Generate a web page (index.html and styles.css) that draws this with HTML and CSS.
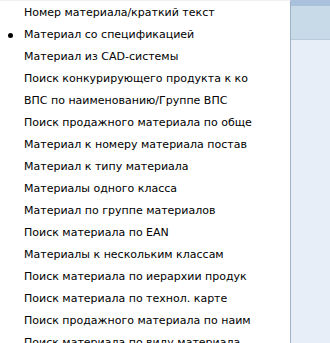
FILE: index.html
```html
<!DOCTYPE html>
<html lang="ru">
  <head>
    <meta charset="UTF-8" />
    <title>Поиск материала</title>
    <link rel="stylesheet" href="styles.css">
  </head>
  <body>
    <div class="screen">
      <ul class="menu">
        <li>Номер материала/краткий текст</li>
        <li class="active">Материал со спецификацией</li>
        <li>Материал из CAD-системы</li>
        <li>Поиск конкурирующего продукта к ко</li>
        <li>ВПС по наименованию/Группе ВПС</li>
        <li>Поиск продажного материала по обще</li>
        <li>Материал к номеру материала постав</li>
        <li>Материал к типу материала</li>
        <li>Материалы одного класса</li>
        <li>Материал по группе материалов</li>
        <li>Поиск материала по EAN</li>
        <li>Материалы к нескольким классам</li>
        <li>Поиск материала по иерархии продук</li>
        <li>Поиск материала по технол. карте</li>
        <li>Поиск продажного материала по наим</li>
        <li>Поиск материала по виду материала</li>
      </ul>
      <div class="side">
        <div class="side-top"></div>
        <div class="side-head"></div>
        <div class="side-body"></div>
      </div>
    </div>
  </body>
</html>
```

FILE: styles.css
```css
body {
  margin: 0;
  font-family: Tahoma, "DejaVu Sans", sans-serif;
  font-size: 11px;
  color: #000;
  background: #e8eef7;
  overflow: hidden;
}

.screen {
  display: flex;
  height: 343px;
}

.menu {
  list-style: none;
  margin: 0;
  padding: 2px 0 0;
  width: 290px;
  background: #fff;
  border-top: 1px solid #eef0f2;
  border-right: 1px solid #9fb1c9;
  overflow: hidden;
}

.menu li {
  height: 22px;
  line-height: 20px;
  padding-left: 24px;
  white-space: nowrap;
  position: relative;
}

.menu li.active::before {
  content: "";
  position: absolute;
  left: 8px;
  top: 8px;
  width: 5px;
  height: 5px;
  border-radius: 50%;
  background: #000;
}

.side {
  flex: 1;
  display: flex;
  flex-direction: column;
}

.side-top {
  height: 6px;
  background: #a9c1dc;
}

.side-head {
  height: 33px;
  background: #c8d9e7;
  border-bottom: 1px solid #b7c9da;
}

.side-body {
  flex: 1;
  background: #e8eef7;
}
```
